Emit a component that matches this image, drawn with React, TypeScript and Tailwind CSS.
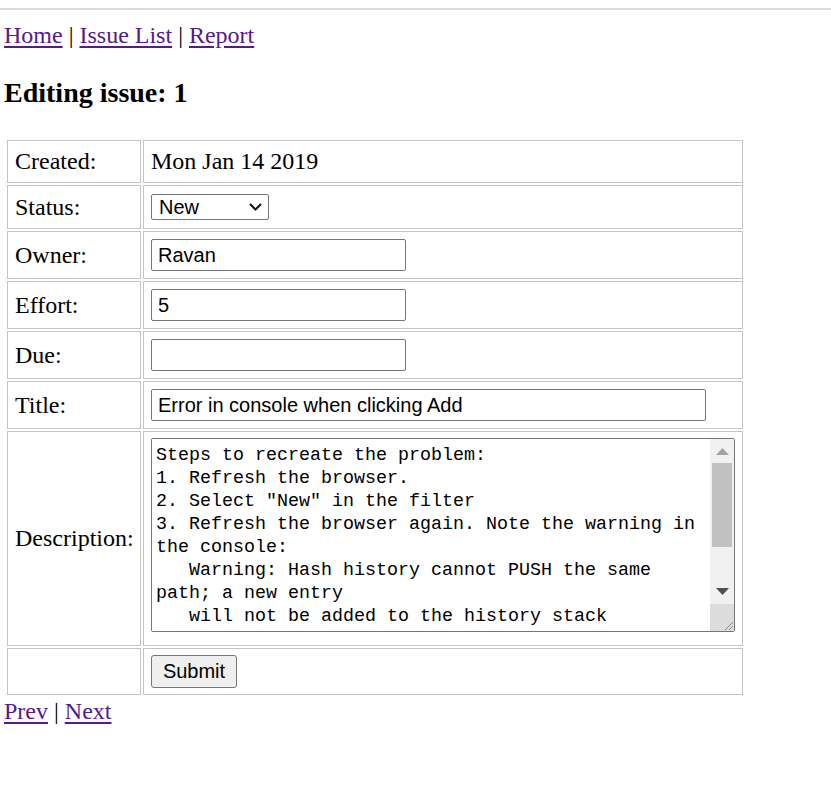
import React from "react";

const serif = "font-['Liberation_Serif','Times_New_Roman',serif]";
const sans = "font-['Liberation_Sans',Arial,sans-serif]";
const mono = "font-['Liberation_Mono','Courier_New',monospace]";

const description =
  'Steps to recreate the problem:\n1. Refresh the browser.\n2. Select "New" in the filter\n3. Refresh the browser again. Note the warning in\nthe console:\n   Warning: Hash history cannot PUSH the same\npath; a new entry\n   will not be added to the history stack';

function Cell({ children, className = "items-center" }: { children?: React.ReactNode; className?: string }) {
  return (
    <div className={`flex border border-[#c4c4c4] px-[7px] ${className}`}>
      {children}
    </div>
  );
}

function Link({ children }: { children: React.ReactNode }) {
  return (
    <a href="#" className="text-[#551a8b] underline underline-offset-[3px]">
      {children}
    </a>
  );
}

export default function App() {
  const inputCls = `${sans} text-[20px] h-[32px] border border-[#767676] rounded-[2px] px-[6px] bg-white text-black outline-none`;
  return (
    <div className={`${serif} min-h-[786px] w-full bg-white text-black text-[24px] leading-[27px]`}>
      <div className="pt-[8px]">
        <div className="h-[2px] bg-[#dcdcdc]" />
      </div>
      <div className="px-[4px]">
        <div className="mt-[12px] leading-[27px]">
          <Link>Home</Link> | <Link>Issue List</Link> | <Link>Report</Link>
        </div>
        <h3 className="mt-[28px] text-[28px] font-bold leading-[32px]">Editing issue: 1</h3>
        <form className="mt-[31px] ml-[3px] grid w-fit grid-cols-[134px_600px] grid-rows-[43px_44px_48px_48px_48px_48px_215px_47px] gap-[2px]">
          <Cell>Created:</Cell>
          <Cell>Mon Jan 14 2019</Cell>

          <Cell>Status:</Cell>
          <Cell>
            <div className="relative">
              <select
                defaultValue="New"
                className={`${sans} block h-[26px] w-[118px] appearance-none rounded-[2px] border border-[#767676] bg-white py-0 pl-[7px] text-[20px] leading-[24px] text-black outline-none`}
              >
                <option>New</option>
                <option>Open</option>
                <option>Assigned</option>
                <option>Fixed</option>
                <option>Verified</option>
                <option>Closed</option>
              </select>
              <svg
                className="pointer-events-none absolute right-[7px] top-[9px]"
                width="13"
                height="8"
                viewBox="0 0 13 8"
              >
                <path d="M1 1 L6.5 6.5 L12 1" fill="none" stroke="#111" strokeWidth="2" />
              </svg>
            </div>
          </Cell>

          <Cell>Owner:</Cell>
          <Cell>
            <input className={`${inputCls} w-[255px]`} defaultValue="Ravan" />
          </Cell>

          <Cell>Effort:</Cell>
          <Cell>
            <input className={`${inputCls} w-[255px]`} defaultValue="5" />
          </Cell>

          <Cell>Due:</Cell>
          <Cell>
            <input className={`${inputCls} w-[255px]`} defaultValue="" />
          </Cell>

          <Cell>Title:</Cell>
          <Cell>
            <input className={`${inputCls} w-[555px]`} defaultValue="Error in console when clicking Add" />
          </Cell>

          <Cell>Description:</Cell>
          <Cell className="items-start pt-[6px]">
            <div className="flex h-[194px] w-[585px] overflow-hidden rounded-[2px] border border-[#767676] bg-white">
              <textarea
                wrap="off"
                readOnly
                defaultValue={description}
                className={`${mono} h-full flex-1 resize-none overflow-hidden whitespace-pre border-0 bg-white pl-[4px] pt-[5px] text-[18.33px] leading-[23px] text-black outline-none`}
              />
              <div className="flex w-[24px] flex-col bg-[#f1f1f1]">
                <div className="flex h-[24px] items-center justify-center">
                  <svg width="13" height="7" viewBox="0 0 13 7">
                    <path d="M0 7 L6.5 0 L13 7 Z" fill="#a3a3a3" />
                  </svg>
                </div>
                <div className="mx-[2px] h-[84px] bg-[#c1c1c1]" />
                <div className="flex-1" />
                <div className="flex h-[26px] items-center justify-center">
                  <svg width="13" height="7" viewBox="0 0 13 7">
                    <path d="M0 0 L13 0 L6.5 7 Z" fill="#505050" />
                  </svg>
                </div>
                <div className="flex h-[27px] items-end justify-end bg-[#dcdcdc]">
                  <svg width="12" height="12" viewBox="0 0 12 12">
                    <path d="M11 3 L3 11 M11 7 L7 11" stroke="#8a8a8a" strokeWidth="1" />
                  </svg>
                </div>
              </div>
            </div>
          </Cell>

          <Cell />
          <Cell>
            <button
              type="button"
              className={`${sans} h-[33px] w-[86px] rounded-[3px] border border-[#767676] bg-[#efefef] text-[20px] text-black`}
            >
              Submit
            </button>
          </Cell>
        </form>
        <div className="mt-[3px] leading-[27px]">
          <Link>Prev</Link> | <Link>Next</Link>
        </div>
      </div>
    </div>
  );
}
